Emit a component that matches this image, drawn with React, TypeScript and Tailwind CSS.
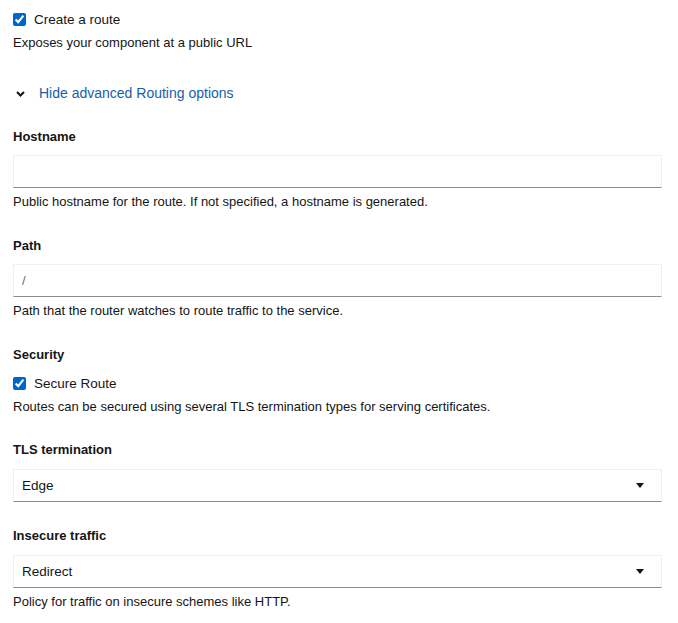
export default function App() {
    return (
        <main
            className="min-h-screen bg-white pl-[13px] pr-[16px] pt-[9px] text-[13px] leading-[21px] text-[#151515]"
            style={{ fontFamily: '"Liberation Sans", Arial, sans-serif' }}
        >
            <label className="flex items-center">
                <input type="checkbox" defaultChecked className="h-[13px] w-[13px] accent-[#0066cc]" />
                <span className="ml-[8px] text-[13.5px]">Create a route</span>
            </label>
            <p className="mt-[2px]">Exposes your component at a public URL</p>

            <button className="mt-[30px] flex items-center text-[14px] text-[#175ea8]">
                <svg className="ml-[3px] h-[6px] w-[9px]" viewBox="0 0 9 6" fill="none" stroke="#151515" strokeWidth={2}>
                    <path d="M1 1l3.5 3.5L8 1" />
                </svg>
                <span className="ml-[14px]">Hide advanced Routing options</span>
            </button>

            <div className="mt-[22px] font-bold">Hostname</div>
            <div className="mt-[8px] h-[33px] border border-[#f0f0f0] border-b-[#8a8d90]" />
            <p className="mt-[3px]">Public hostname for the route. If not specified, a hostname is generated.</p>

            <div className="mt-[23px] font-bold">Path</div>
            <div className="mt-[8px] flex h-[33px] items-center border border-[#f0f0f0] border-b-[#8a8d90] px-[8px] text-[#6a6e73]">
                /
            </div>
            <p className="mt-[3px]">Path that the router watches to route traffic to the service.</p>

            <div className="mt-[23px] font-bold">Security</div>
            <label className="mt-[8px] flex items-center">
                <input type="checkbox" defaultChecked className="h-[13px] w-[13px] accent-[#0066cc]" />
                <span className="ml-[8px] text-[13.5px]">Secure Route</span>
            </label>
            <p className="mt-[2px]">Routes can be secured using several TLS termination types for serving certificates.</p>

            <div className="mt-[22px] font-bold">TLS termination</div>
            <Select value="Edge" />

            <div className="mt-[23px] font-bold">Insecure traffic</div>
            <Select value="Redirect" />
            <p className="mt-[3px]">Policy for traffic on insecure schemes like HTTP.</p>
        </main>
    );
}

function Select({ value }: { value: string }) {
    return (
        <div className="mt-[9px] flex h-[33px] items-center justify-between border border-[#f0f0f0] border-b-[#8a8d90] pl-[8px] pr-[17px] text-[13.5px]">
            <span>{value}</span>
            <svg className="h-[5px] w-[8px]" viewBox="0 0 8 5" fill="#151515">
                <path d="M0 0h8L4 5z" />
            </svg>
        </div>
    );
}
